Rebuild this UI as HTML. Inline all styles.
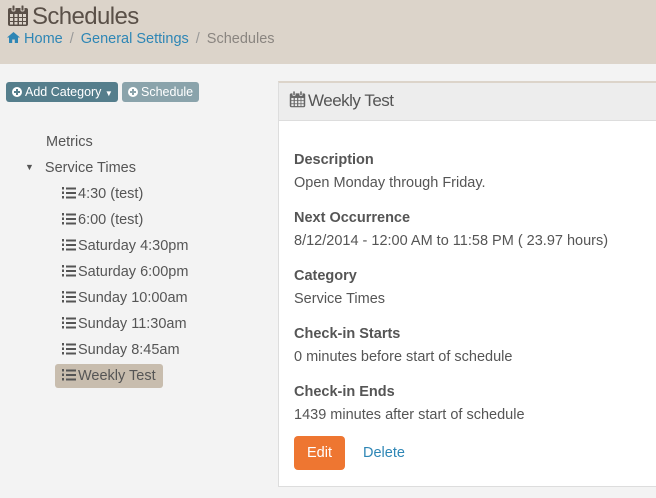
<!DOCTYPE html>
<html><head><meta charset="utf-8"><style>
*{box-sizing:border-box;margin:0;padding:0}
body{width:656px;height:498px;overflow:hidden;background:#f3f3f3;font-family:"Liberation Sans",sans-serif;color:#555;position:relative}
.hdr{position:absolute;left:0;top:0;width:656px;height:64px;background:#dcd4ca}
.title{position:absolute;left:7px;top:3px;font-size:24px;color:#5a5048;letter-spacing:-0.6px}
.title svg{vertical-align:-3px;margin-right:3px}
.bc{position:absolute;left:7px;top:31px;font-size:14.5px;color:#2e86b5}
.bc .sep{color:#999;margin:0 7px}
.bc .cur{color:#8a8580}
.btn{position:absolute;top:82px;height:20px;border-radius:3px;color:#fff;font-size:12.5px;line-height:20px;padding-left:6px;white-space:nowrap}
.b1{left:6px;width:112px;background:#557e8c}
.b2{left:122px;width:77px;background:#8aa3ab}
.dot{display:inline-block;width:10px;height:10px;border-radius:50%;background:#fff;position:relative;vertical-align:-1px;margin-right:3px}
.dot:before{content:"";position:absolute;left:2px;top:4px;width:6px;height:2px;background:#557e8c}
.dot:after{content:"";position:absolute;left:4px;top:2px;width:2px;height:6px;background:#557e8c}
.b2 .dot:before,.b2 .dot:after{background:#8aa3ab}
.tree{position:absolute;font-size:14.5px;color:#555}
.item{position:absolute;left:62px;font-size:14.5px;color:#555;white-space:nowrap}
.item svg{vertical-align:-1px;margin-right:2px}
.sel{position:absolute;left:55px;top:364px;width:108px;height:24px;background:#c8bdae;border-radius:3px}
.panel{position:absolute;left:278px;top:81px;width:390px;height:406px;background:#fff;border:1px solid #ddd;border-top:2px solid #dcd4ca}
.ph{height:38px;background:#ededed;border-bottom:1px solid #ddd;font-size:17px;color:#555;padding:8px 0 0 10px;letter-spacing:-0.5px}
.ph svg{vertical-align:-2px;margin-right:2px}
.lab{position:absolute;left:15px;font-size:14.5px;font-weight:bold;color:#555}
.val{position:absolute;left:15px;font-size:14.5px;color:#555;white-space:nowrap}
.edit{position:absolute;left:15px;top:353px;width:51px;height:34px;background:#ee7631;border-radius:4px;color:#fff;font-size:14.5px;text-align:center;line-height:34px}
.del{position:absolute;left:84px;top:362px;font-size:14.5px;color:#2e86b5}
</style></head><body>
<div class="hdr">
<div class="title"><svg width="22" height="22" viewBox="0 0 22 22"><rect x="1" y="3" width="20" height="18" rx="2" fill="#5a5048"/><g fill="#dcd4ca"><rect x="3" y="9" width="3" height="3"/><rect x="7.5" y="9" width="3" height="3"/><rect x="12" y="9" width="3" height="3"/><rect x="16" y="9" width="3" height="3"/><rect x="3" y="13" width="3" height="3"/><rect x="7.5" y="13" width="3" height="3"/><rect x="12" y="13" width="3" height="3"/><rect x="16" y="13" width="3" height="3"/><rect x="3" y="17" width="3" height="2.5"/><rect x="7.5" y="17" width="3" height="2.5"/><rect x="12" y="17" width="3" height="2.5"/><rect x="16" y="17" width="3" height="2.5"/></g><rect x="5" y="0" width="3" height="6" rx="1" fill="#5a5048" stroke="#dcd4ca"/><rect x="14" y="0" width="3" height="6" rx="1" fill="#5a5048" stroke="#dcd4ca"/></svg>Schedules</div>
<div class="bc"><svg width="13" height="11" viewBox="0 0 13 11"><path d="M6.5 0L0 5.5h2V11h3.2V7.5h2.6V11H11V5.5h2z" fill="#2e86b5"/></svg> Home<span class="sep">/</span>General Settings<span class="sep">/</span><span class="cur">Schedules</span></div>
</div>
<div class="btn b1"><span class="dot"></span>Add Category <span style="font-size:8px">▼</span></div>
<div class="btn b2"><span class="dot"></span>Schedule</div>

<div class="tree" style="left:46px;top:134px">Metrics</div>
<div class="tree" style="left:25px;top:160px"><span style="font-size:9px;vertical-align:2px">▼</span><span style="margin-left:11px">Service Times</span></div>
<div class="sel"></div>
<div class="item" style="top:186px"><svg width="14" height="12" viewBox="0 0 14 12"><g fill="#555"><rect x="0" y="0" width="2" height="2.5"/><rect x="0" y="4.5" width="2" height="2.5"/><rect x="0" y="9" width="2" height="2.5"/><rect x="4" y="0.5" width="10" height="2"/><rect x="4" y="5" width="10" height="2"/><rect x="4" y="9.5" width="10" height="2"/></g></svg>4:30 (test)</div>
<div class="item" style="top:212px"><svg width="14" height="12" viewBox="0 0 14 12"><g fill="#555"><rect x="0" y="0" width="2" height="2.5"/><rect x="0" y="4.5" width="2" height="2.5"/><rect x="0" y="9" width="2" height="2.5"/><rect x="4" y="0.5" width="10" height="2"/><rect x="4" y="5" width="10" height="2"/><rect x="4" y="9.5" width="10" height="2"/></g></svg>6:00 (test)</div>
<div class="item" style="top:238px"><svg width="14" height="12" viewBox="0 0 14 12"><g fill="#555"><rect x="0" y="0" width="2" height="2.5"/><rect x="0" y="4.5" width="2" height="2.5"/><rect x="0" y="9" width="2" height="2.5"/><rect x="4" y="0.5" width="10" height="2"/><rect x="4" y="5" width="10" height="2"/><rect x="4" y="9.5" width="10" height="2"/></g></svg>Saturday 4:30pm</div>
<div class="item" style="top:264px"><svg width="14" height="12" viewBox="0 0 14 12"><g fill="#555"><rect x="0" y="0" width="2" height="2.5"/><rect x="0" y="4.5" width="2" height="2.5"/><rect x="0" y="9" width="2" height="2.5"/><rect x="4" y="0.5" width="10" height="2"/><rect x="4" y="5" width="10" height="2"/><rect x="4" y="9.5" width="10" height="2"/></g></svg>Saturday 6:00pm</div>
<div class="item" style="top:290px"><svg width="14" height="12" viewBox="0 0 14 12"><g fill="#555"><rect x="0" y="0" width="2" height="2.5"/><rect x="0" y="4.5" width="2" height="2.5"/><rect x="0" y="9" width="2" height="2.5"/><rect x="4" y="0.5" width="10" height="2"/><rect x="4" y="5" width="10" height="2"/><rect x="4" y="9.5" width="10" height="2"/></g></svg>Sunday 10:00am</div>
<div class="item" style="top:316px"><svg width="14" height="12" viewBox="0 0 14 12"><g fill="#555"><rect x="0" y="0" width="2" height="2.5"/><rect x="0" y="4.5" width="2" height="2.5"/><rect x="0" y="9" width="2" height="2.5"/><rect x="4" y="0.5" width="10" height="2"/><rect x="4" y="5" width="10" height="2"/><rect x="4" y="9.5" width="10" height="2"/></g></svg>Sunday 11:30am</div>
<div class="item" style="top:342px"><svg width="14" height="12" viewBox="0 0 14 12"><g fill="#555"><rect x="0" y="0" width="2" height="2.5"/><rect x="0" y="4.5" width="2" height="2.5"/><rect x="0" y="9" width="2" height="2.5"/><rect x="4" y="0.5" width="10" height="2"/><rect x="4" y="5" width="10" height="2"/><rect x="4" y="9.5" width="10" height="2"/></g></svg>Sunday 8:45am</div>
<div class="item" style="top:368px"><svg width="14" height="12" viewBox="0 0 14 12"><g fill="#555"><rect x="0" y="0" width="2" height="2.5"/><rect x="0" y="4.5" width="2" height="2.5"/><rect x="0" y="9" width="2" height="2.5"/><rect x="4" y="0.5" width="10" height="2"/><rect x="4" y="5" width="10" height="2"/><rect x="4" y="9.5" width="10" height="2"/></g></svg>Weekly Test</div>

<div class="panel">
<div class="ph"><svg width="17" height="17" viewBox="0 0 22 22"><rect x="1" y="3" width="20" height="18" rx="2" fill="#666"/><g fill="#ededed"><rect x="3" y="9" width="3" height="3"/><rect x="7.5" y="9" width="3" height="3"/><rect x="12" y="9" width="3" height="3"/><rect x="16" y="9" width="3" height="3"/><rect x="3" y="13" width="3" height="3"/><rect x="7.5" y="13" width="3" height="3"/><rect x="12" y="13" width="3" height="3"/><rect x="16" y="13" width="3" height="3"/><rect x="3" y="17" width="3" height="2.5"/><rect x="7.5" y="17" width="3" height="2.5"/><rect x="12" y="17" width="3" height="2.5"/><rect x="16" y="17" width="3" height="2.5"/></g><rect x="5" y="0" width="3" height="6" rx="1" fill="#666" stroke="#ededed"/><rect x="14" y="0" width="3" height="6" rx="1" fill="#666" stroke="#ededed"/></svg>Weekly Test</div>
<div class="lab" style="top:69px">Description</div>
<div class="val" style="top:92px">Open Monday through Friday.</div>
<div class="lab" style="top:127px">Next Occurrence</div>
<div class="val" style="top:150px">8/12/2014 - 12:00 AM to 11:58 PM ( 23.97 hours)</div>
<div class="lab" style="top:185px">Category</div>
<div class="val" style="top:208px">Service Times</div>
<div class="lab" style="top:243px">Check-in Starts</div>
<div class="val" style="top:266px">0 minutes before start of schedule</div>
<div class="lab" style="top:301px">Check-in Ends</div>
<div class="val" style="top:324px">1439 minutes after start of schedule</div>
<div class="edit">Edit</div>
<div class="del">Delete</div>
</div>
</body></html>
